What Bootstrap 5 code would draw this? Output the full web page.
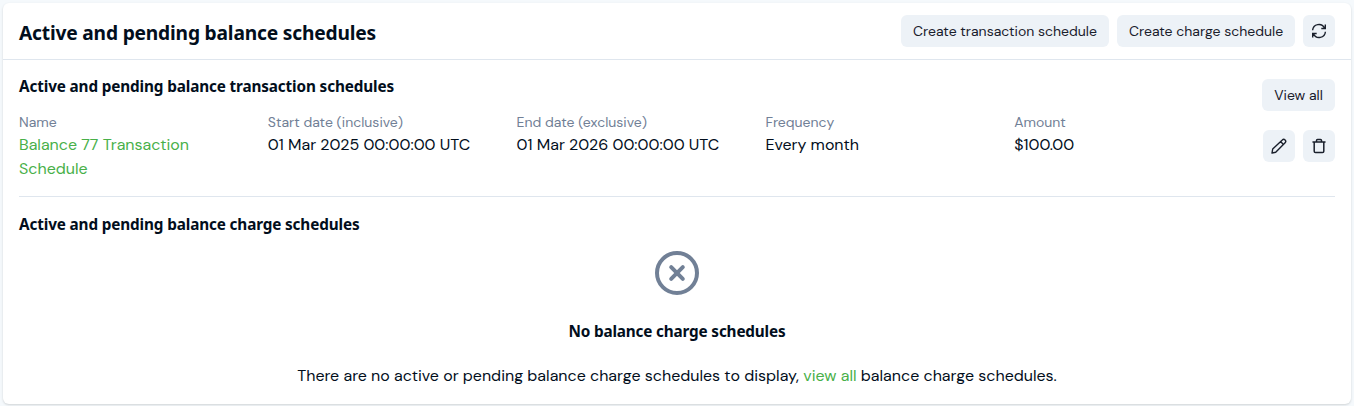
<!DOCTYPE html>
<html lang="en">
<head>
<meta charset="utf-8">
<meta name="viewport" content="width=device-width, initial-scale=1">
<title>Balance schedules</title>
<link href="https://cdn.jsdelivr.net/npm/bootstrap@5.3.0/dist/css/bootstrap.min.css" rel="stylesheet">
<style>
body{background:#f5f9fc;color:#020e1c;font:16px/24px "DM Sans",Inter,sans-serif;padding:3px 3px 2px}
.panel{--bs-card-border-width:0;--bs-card-border-radius:6px;--bs-card-color:#020e1c;height:401px;box-shadow:0 1px 3px rgba(0,0,0,.1),0 1px 2px rgba(0,0,0,.06)}
.panel-head{padding:12px 16px;border-bottom:1px solid #dfe6ee}
.panel-body{padding:19px 16px 0}
h2,h3{font-family:"Segoe UI","Noto Sans",sans-serif;font-weight:700;margin:0}
h2{font-size:19.2px;line-height:28px;letter-spacing:-.19px;padding-top:3px}
h3{font-size:15.3px;line-height:24px;letter-spacing:-.14px}
.raise{margin-top:-5px}
.btn-soft{--bs-btn-bg:#edf2f7;--bs-btn-color:#1a202c;--bs-btn-hover-bg:#e2e8f0;--bs-btn-border-width:0;--bs-btn-padding-x:12px;--bs-btn-padding-y:0;--bs-btn-font-size:14px;--bs-btn-line-height:32px;--bs-btn-border-radius:6px;height:32px;white-space:nowrap}
.btn-icon{width:32px;padding:0;display:inline-flex;align-items:center;justify-content:center}
.wide-tx{width:208px}.wide-ch{width:178px}.wide-all{width:73px}
.field-name{font-size:14px;line-height:22px;color:#718096}
.brand-link{color:#48b049;text-decoration:none}
.divided{border-bottom:1px solid #dfe6ee;padding-bottom:15px;margin-bottom:15px}
.empty{padding-top:15px}
.empty h3{margin:24px 0 21px;letter-spacing:-.17px}
svg{display:block;fill:none;stroke:currentColor;stroke-linecap:round;stroke-linejoin:round}
.arrows{stroke-linecap:butt;stroke-linejoin:miter}
.muted-icon{color:#718096}
</style>
</head>
<body>
<main class="card panel">
  <header class="panel-head d-flex align-items-center justify-content-between">
    <h2>Active and pending balance schedules</h2>
    <div class="d-flex gap-2">
      <button class="btn btn-soft wide-tx">Create transaction schedule</button>
      <button class="btn btn-soft wide-ch">Create charge schedule</button>
      <button class="btn btn-soft btn-icon" aria-label="Refresh">
        <svg class="arrows" width="16" height="16" viewBox="0 0 16 16" stroke-width="1.4"><path d="M1.6 7.3A6.3 6.3 0 0 1 13.5 5M14.3 1.5v4h-4M14.4 8.7A6.3 6.3 0 0 1 2.5 11M1.7 14.5v-4h4"/></svg>
      </button>
    </div>
  </header>
  <div class="panel-body">
    <section class="divided">
      <div class="d-flex align-items-start justify-content-between">
        <h3 class="raise">Active and pending balance transaction schedules</h3>
        <button class="btn btn-soft wide-all px-0">View all</button>
      </div>
      <div class="d-flex align-items-center gap-3">
        <div class="flex-grow-1">
          <div class="row row-cols-5 gx-3">
            <div><div class="field-name">Name</div><a href="#" class="brand-link">Balance 77 Transaction Schedule</a></div>
            <div><div class="field-name">Start date (inclusive)</div><div>01 Mar 2025 00:00:00 UTC</div></div>
            <div><div class="field-name">End date (exclusive)</div><div>01 Mar 2026 00:00:00 UTC</div></div>
            <div><div class="field-name">Frequency</div><div>Every month</div></div>
            <div><div class="field-name">Amount</div><div>$100.00</div></div>
          </div>
        </div>
        <div class="d-flex gap-2">
          <button class="btn btn-soft btn-icon" aria-label="Edit">
            <svg width="16" height="16" viewBox="0 0 16 16" stroke-width="1.4"><path d="M1 15l.7-4L11.3 1.9a1.95 1.95 0 0 1 2.8 2.8L4.7 14.2zM9.6 3.6l2.8 2.8"/></svg>
          </button>
          <button class="btn btn-soft btn-icon" aria-label="Delete">
            <svg width="16" height="16" viewBox="0 0 16 16" stroke-width="1.5"><path d="M2 4h12M3.2 4v9.2c0 .8.5 1.3 1.3 1.3h7c.8 0 1.3-.5 1.3-1.3V4M5.5 4V2.5c0-.6.4-1 1-1h3c.6 0 1 .4 1 1V4"/></svg>
          </button>
        </div>
      </div>
    </section>
    <section>
      <h3>Active and pending balance charge schedules</h3>
      <div class="empty text-center">
        <svg class="mx-auto muted-icon" width="44" height="44" viewBox="0 0 44 44" stroke-width="4"><circle cx="22" cy="22" r="20"/><path d="M16.2 16.2l11.6 11.6M27.8 16.2L16.2 27.8"/></svg>
        <h3>No balance charge schedules</h3>
        <p class="mb-0">There are no active or pending balance charge schedules to display, <a href="#" class="brand-link">view all</a> balance charge schedules.</p>
      </div>
    </section>
  </div>
</main>
<script src="https://cdn.jsdelivr.net/npm/bootstrap@5.3.0/dist/js/bootstrap.bundle.min.js"></script>
</body>
</html>
